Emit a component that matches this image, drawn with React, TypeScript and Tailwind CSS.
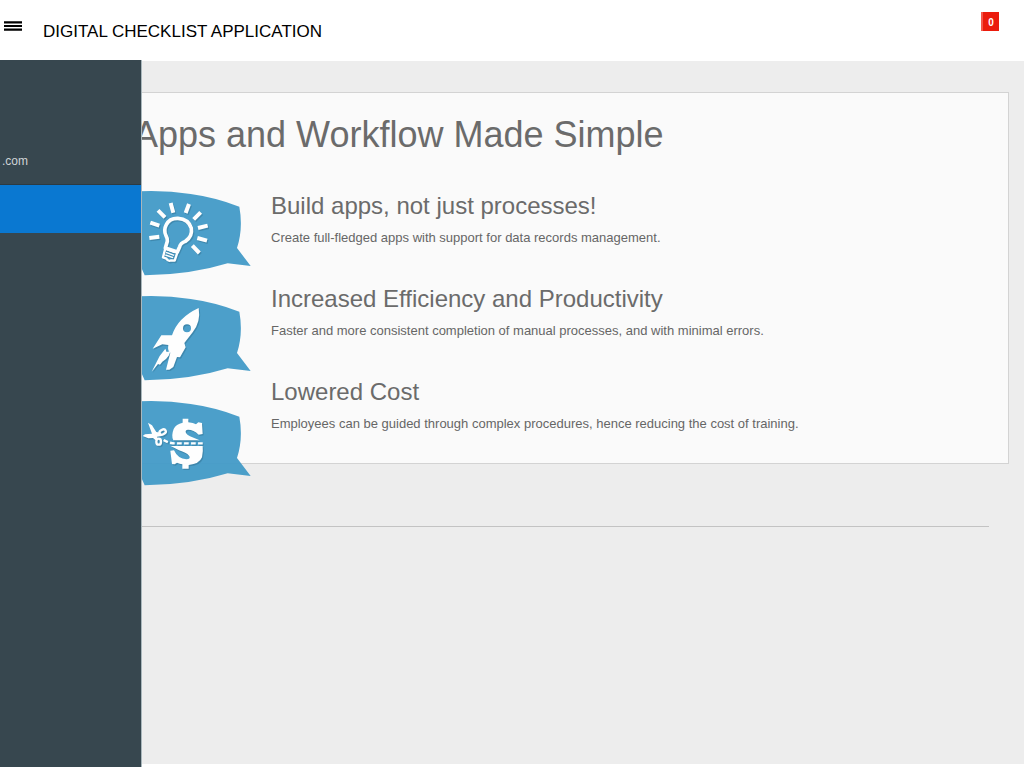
import type { ReactNode } from "react";

function Bubble({ label, children }: { label: string; children: ReactNode }) {
  return (
    <svg
      viewBox="0 0 390 315"
      className="block h-[105px] w-[130px] opacity-95"
      role="img"
      aria-label={label}
    >
      <path
        d="M30 34 Q110 31 182 42 Q255 52 328 80 Q340 145 321 204 L362 258 L293 250 Q180 285 44 286 L36 268 L30 268Z"
        fill="#439bc8"
      />
      <g transform="translate(3 4)" opacity=".28" className="text-[#12445f]">
        {children}
      </g>
      <g className="text-white">{children}</g>
    </svg>
  );
}

function Bulb() {
  return (
    <g stroke="currentColor" fill="none">
      <path
        strokeWidth="11"
        strokeLinejoin="round"
        d="M106 204 L112 184 Q113 176 108 167 Q100 151 109 134 Q119 114 144 115 Q176 117 184 145 Q188 170 166 184 Q151 190 149 200 L142 216Z"
      />
      <path strokeWidth="4" d="M110 209 L134 218 M108 217 L132 226 M106 225 L129 233" />
      <path strokeWidth="7" strokeLinejoin="round" d="M106 205 L99 232 L109 236 Q115 246 124 241 L134 242 L143 215" />
      <path
        strokeWidth="12"
        d="M58 174 L88 170 M61 128 L88 137 M84 91 L105 112 M122 69 L130 98 M177 72 L167 99 M212 97 L191 118 M233 137 L204 144 M231 182 L202 174 M208 219 L187 197"
      />
    </g>
  );
}

function Rocket() {
  return (
    <g fill="currentColor">
      <path
        fillRule="evenodd"
        d="M206 69 Q213 110 188 142 L163 174 L167 187 L150 217 L141 216 L130 246 L118 254 L108 254 L121 203 Q112 198 115 180 L97 178 L68 191 L94 151 L126 151 Q143 98 206 69Z M171 118 A12 12 0 1 0 171 142 A12 12 0 1 0 171 118Z"
      />
      <path d="M106 191 L110 201 L121 199 L117 211 L108 222 L97 230 L90 239 L84 237 L65 260 L89 213Z" />
    </g>
  );
}

function CutCost() {
  return (
    <g fill="currentColor">
      <path d="M158 86 H175 V97 Q190 99 198 103 L205 97 L216 99 L218 132 L206 134 Q191 119 174 119 Q164 120 168 129 Q171 134 180 139 L209 151 H130 Q123 138 131 117 Q138 102 158 98Z" />
      <path d="M122 168 H218 Q220 184 216 202 Q208 222 176 225 V236 H157 V223 Q149 222 141 218 L134 223 L126 222 L121 182 L132 181 Q144 207 169 208 Q184 206 177 197 Q169 188 147 181Z" />
      <g fill="none" stroke="currentColor">
        <path strokeWidth="7" strokeDasharray="14 7" d="M101 150 Q116 160 136 160 H220" />
        <ellipse cx="98" cy="126" rx="10" ry="7" strokeWidth="7" transform="rotate(-28 98 126)" />
        <ellipse cx="86" cy="155" rx="7" ry="9" strokeWidth="7" />
      </g>
      <path d="M54 98 L66 106 L79 126 L92 128 L95 138 L81 140 L84 149 L76 150 L69 144 L55 145 L38 138 L45 133 L66 131Z" />
    </g>
  );
}

const features = [
  {
    title: "Build apps, not just processes!",
    text: "Create full-fledged apps with support for data records management.",
  },
  {
    title: "Increased Efficiency and Productivity",
    text: "Faster and more consistent completion of manual processes, and with minimal errors.",
  },
  {
    title: "Lowered Cost",
    text: "Employees can be guided through complex procedures, hence reducing the cost of training.",
  },
];

export default function App() {
  return (
    <div className="flex min-h-screen flex-col overflow-x-hidden bg-white font-['Liberation_Sans',Arial,sans-serif] text-[#6b6b6b]">
      <header className="flex h-[61px] items-start justify-between pr-[25px] pl-1 text-black">
        <div className="flex items-start gap-[21px]">
          <button type="button" aria-label="Toggle menu" className="mt-[21px] block">
            <svg viewBox="0 0 18 10" className="block h-[10px] w-[18px]">
              <path d="M0 .3H18V2.5H0Z M0 3.9H18V6.1H0Z M0 7.5H18V9.7H0Z" fill="#000" />
            </svg>
          </button>
          <span className="mt-5 text-[17px] leading-6">DIGITAL CHECKLIST APPLICATION</span>
        </div>
        <span className="mt-3 flex h-[19px] w-[18px] items-center justify-center border-l-2 border-[#f4574b] bg-[#eb1c0d] pt-0.5 text-[10px] font-bold text-white">
          0
        </span>
      </header>

      <div className="relative mb-1 flex-1 bg-[#ededed]">
        <aside className="absolute -top-px -bottom-[3px] left-0 z-10 w-[142px] border-r border-[#a9b7bc] bg-[#37474f]">
          <div className="flex h-[124px] items-end pb-[15px] pl-0.5 text-[12px] leading-4 text-[#cfd4d6]">
            .com
          </div>
          <a href="#home" aria-label="Home" className="block h-[49px] border-t border-[#2c3a42] bg-[#0a78d1]" />
        </aside>

        <main className="px-[15px] pt-[31px]">
          <section className="h-[372px] border border-[#d3d3d3] bg-[#fafafa] pl-[114px]">
            <h1 className="pt-5 pl-1 text-[36px] leading-[44px] whitespace-nowrap">
              Apps and Workflow Made Simple
            </h1>
            <div className="mt-[23px] flex items-start gap-[11px]">
              <div className="shrink-0">
                <Bubble label="Light bulb"><Bulb /></Bubble>
                <Bubble label="Rocket"><Rocket /></Bubble>
                <Bubble label="Reduced cost"><CutCost /></Bubble>
              </div>
              <div className="flex flex-col gap-9 pt-[10px]">
                {features.map((feature) => (
                  <div key={feature.title}>
                    <h2 className="text-[24px] leading-8">{feature.title}</h2>
                    <p className="mt-[7px] text-[13px] leading-[18px] text-[#666]">{feature.text}</p>
                  </div>
                ))}
              </div>
            </div>
          </section>
          <hr className="mt-[62px] mr-5 border-[#c3c3c3]" />
        </main>
      </div>
    </div>
  );
}
